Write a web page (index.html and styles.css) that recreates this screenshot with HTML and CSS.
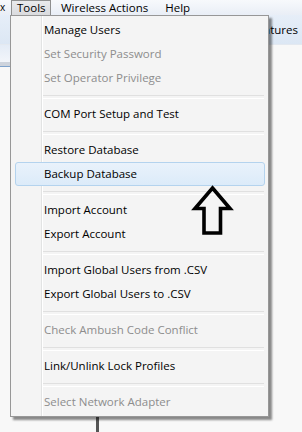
FILE: index.html
```html
<html lang="en">
<head>
    <meta charset="UTF-8">
    <meta name="viewport" content="width=device-width, initial-scale=1.0">
    <title>Tools</title>
    <link rel="stylesheet" href="styles.css">
</head>
<body>
    <div class="menubar">
        <span class="lead">x</span>
        <span class="top-item open">Tools</span>
        <span class="top-item">Wireless Actions</span>
        <span class="top-item">Help</span>
    </div>
    <div class="toolbar">
        <span class="tool-label">Features</span>
    </div>
    <div class="content">
        <div class="side">
            <div class="side-head"></div>
            <div class="side-band"></div>
        </div>
        <div class="tree-line"></div>
    </div>

    <!-- Tools dropdown -->
    <div class="menu">
        <div class="item">Manage Users</div>
        <div class="item disabled">Set Security Password</div>
        <div class="item disabled">Set Operator Privilege</div>
        <div class="sep"></div>
        <div class="item">COM Port Setup and Test</div>
        <div class="sep"></div>
        <div class="item">Restore Database</div>
        <div class="item hover">Backup Database</div>
        <div class="sep"></div>
        <div class="item">Import Account</div>
        <div class="item">Export Account</div>
        <div class="sep"></div>
        <div class="item">Import Global Users from .CSV</div>
        <div class="item">Export Global Users to .CSV</div>
        <div class="sep"></div>
        <div class="item disabled">Check Ambush Code Conflict</div>
        <div class="sep"></div>
        <div class="item">Link/Unlink Lock Profiles</div>
        <div class="sep"></div>
        <div class="item disabled">Select Network Adapter</div>
    </div>

    <svg class="arrow" width="45" height="60" viewBox="190 180 45 60">
        <polygon points="212.5,188 230,208.5 220.5,208.5 220.5,233 204,233 204,208.5 195,208.5"
                 fill="none" stroke="#000" stroke-width="3.6" stroke-linejoin="miter"/>
    </svg>
</body>
</html>
```

FILE: styles.css
```css
* {
  box-sizing: border-box;
}

body {
  margin: 0;
  width: 302px;
  height: 432px;
  overflow: hidden;
  background: #f8f8f8;
  font-family: "Open Sans", "Noto Sans", sans-serif;
  font-size: 11.5px;
  color: #000;
  position: relative;
}

.menubar {
  display: flex;
  height: 15px;
  line-height: 14px;
  background: linear-gradient(#f7f9fc, #e9eef6);
}

.lead {
  width: 11px;
  font-size: 10px;
}

.top-item {
  padding: 0 6px 0 5px;
  margin-right: 4px;
  border: 1px solid transparent;
  border-bottom: none;
}

.top-item.open {
  background: linear-gradient(#e9eaec, #dadbde);
  border-color: #8e8f8f;
  width: 40px;
}

.toolbar {
  height: 30px;
  display: flex;
  align-items: center;
  justify-content: flex-end;
  padding-right: 4px;
  background: linear-gradient(#e6eef8, #dce7f4);
  border-bottom: 1px solid #e4e9f0;
}

.content {
  display: flex;
  height: 387px;
}

.side {
  width: 10px;
}

.side-head {
  height: 17px;
  background: linear-gradient(#e4ecf6, #f2f5fa);
}

.side-band {
  height: 5px;
  background: #cdd3dc;
  border-bottom: 1px solid #7fa3cc;
}

.tree-line {
  margin-left: 86px;
  width: 3px;
  background: #555;
}

/* dropdown */
.menu {
  position: absolute;
  left: 10px;
  top: 15px;
  width: 259px;
  padding: 2px 0;
  border: 1px solid #979797;
  background: linear-gradient(to right, transparent 30px, #e2e3e3 30px, #e2e3e3 31px, #fff 31px, #fff 32px, transparent 32px), #f4f4f4;
  box-shadow: 3px 3px 2px rgba(0, 0, 0, 0.45);
}

.item {
  height: 24px;
  line-height: 22px;
  margin: 0 3px 0 4px;
  padding-left: 28px;
  border: 1px solid transparent;
  border-radius: 3px;
  white-space: nowrap;
}

.item.disabled {
  color: #8d8d8d;
}

.item.hover {
  background: linear-gradient(#e9f2fb, #dcebf9);
  border-color: #b4d3ee;
}

.sep {
  height: 12px;
  padding-top: 5px;
}

.sep::after {
  content: "";
  display: block;
  margin: 0 4px 0 32px;
  height: 2px;
  border-top: 1px solid #e0e0e0;
  border-bottom: 1px solid #fff;
}

.arrow {
  position: absolute;
  left: 190px;
  top: 180px;
}
```
